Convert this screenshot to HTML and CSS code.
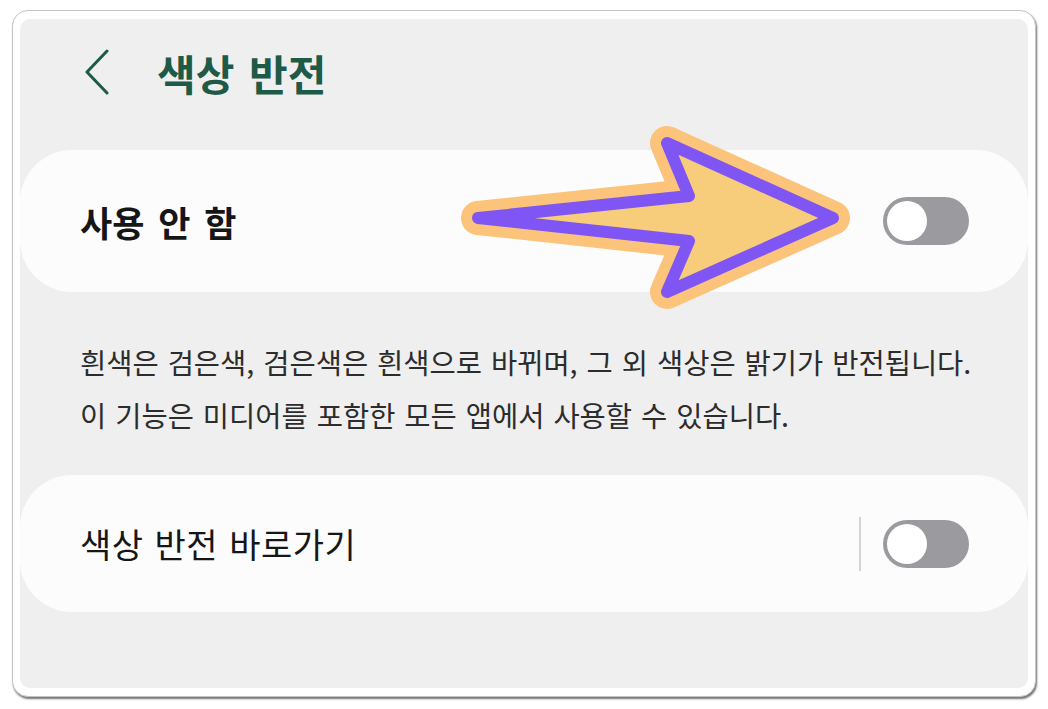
FILE: index.html
```html
<!DOCTYPE html>
<html lang="ko">
<head>
<meta charset="utf-8">
<title>색상 반전</title>
<link rel="stylesheet" href="styles.css">
</head>
<body>
<div class="screen">
  <div class="frame">
    <div class="panel">
      <header class="header">
        <svg class="back" width="26" height="46" viewBox="0 0 26 46" aria-hidden="true">
          <path d="M23 2 L3 23 L23 44" fill="none" stroke="#1d5a47" stroke-width="3" stroke-linecap="round" stroke-linejoin="round"/>
        </svg>
        <h1 class="title">색상 반전</h1>
      </header>

      <div class="card card-main">
        <span class="label label-strong">사용 안 함</span>
        <span class="switch"><span class="knob"></span></span>
      </div>

      <p class="desc">
        <span class="desc-line">흰색은 검은색, 검은색은 흰색으로 바뀌며, 그 외 색상은 밝기가 반전됩니다.</span>
        <span class="desc-line">이 기능은 미디어를 포함한 모든 앱에서 사용할 수 있습니다.</span>
      </p>

      <div class="card card-shortcut">
        <span class="label">색상 반전 바로가기</span>
        <span class="controls">
          <span class="divider"></span>
          <span class="switch"><span class="knob"></span></span>
        </span>
      </div>
    </div>
  </div>

  <svg class="pointer" width="1048" height="709" viewBox="0 0 1048 709" aria-hidden="true">
    <polygon points="478,218 689,196 667,143 833,218 667,292 689,241"
             fill="#f7cd7b" stroke="#fcc47a" stroke-width="34" stroke-linejoin="round"/>
    <polygon points="478,218 689,196 667,143 833,218 667,292 689,241"
             fill="#f7cd7b" stroke="#7f56f3" stroke-width="12" stroke-linejoin="round"/>
  </svg>
</div>
</body>
</html>
```

FILE: styles.css
```css
* {
  box-sizing: border-box;
}

html, body {
  margin: 0;
  padding: 0;
  background: #ffffff;
}

body {
  font-family: "Noto Sans CJK KR", "Noto Sans", sans-serif;
  color: #1e1e1e;
}

.screen {
  position: relative;
  width: 1048px;
  height: 709px;
  padding: 10px 12px 12px 12px;
}

.frame {
  width: 1024px;
  height: 687px;
  background: #ffffff;
  border: 1px solid #c4c4c4;
  border-radius: 16px;
  box-shadow: 1px 2px 2px rgba(0, 0, 0, 0.55);
  padding: 8px 7px 8px 7px;
}

.panel {
  height: 100%;
  background: #efefef;
  border-radius: 10px;
  display: flex;
  flex-direction: column;
}

.header {
  height: 106px;
  display: flex;
  align-items: center;
  padding-left: 64px;
  gap: 47px;
}

.back {
  display: block;
  flex: none;
}

.title {
  margin: 0;
  font-size: 42px;
  font-weight: 700;
  color: #1d5a47;
  word-spacing: 3px;
}

.card {
  background: #fcfcfc;
  border-radius: 52px;
  display: flex;
  align-items: center;
  justify-content: space-between;
  padding: 0 59px 0 60px;
}

.card-main {
  margin-top: 25px;
  height: 142px;
}

.card-shortcut {
  margin-top: 34px;
  height: 137px;
}

.label {
  font-size: 34px;
  font-weight: 400;
  color: #161616;
  letter-spacing: 0.5px;
  word-spacing: 1px;
}

.label-strong {
  font-weight: 700;
  font-size: 35px;
  letter-spacing: 0;
  word-spacing: 4px;
}

.controls {
  display: flex;
  align-items: center;
  gap: 22px;
}

.divider {
  width: 2px;
  height: 54px;
  background: #d4d4d4;
}

.switch {
  width: 86px;
  height: 48px;
  border-radius: 24px;
  background: #9b9b9f;
  display: flex;
  align-items: center;
  padding-left: 4px;
}

.knob {
  width: 40px;
  height: 40px;
  border-radius: 50%;
  background: #ffffff;
}

.desc {
  margin: 43px 0 0 0;
  padding-left: 60px;
  font-size: 28.5px;
  line-height: 53px;
  color: #2c2c2c;
  word-spacing: 1px;
}

.desc-line {
  display: block;
  white-space: nowrap;
}

.pointer {
  position: absolute;
  left: 0;
  top: 0;
  pointer-events: none;
}
```
